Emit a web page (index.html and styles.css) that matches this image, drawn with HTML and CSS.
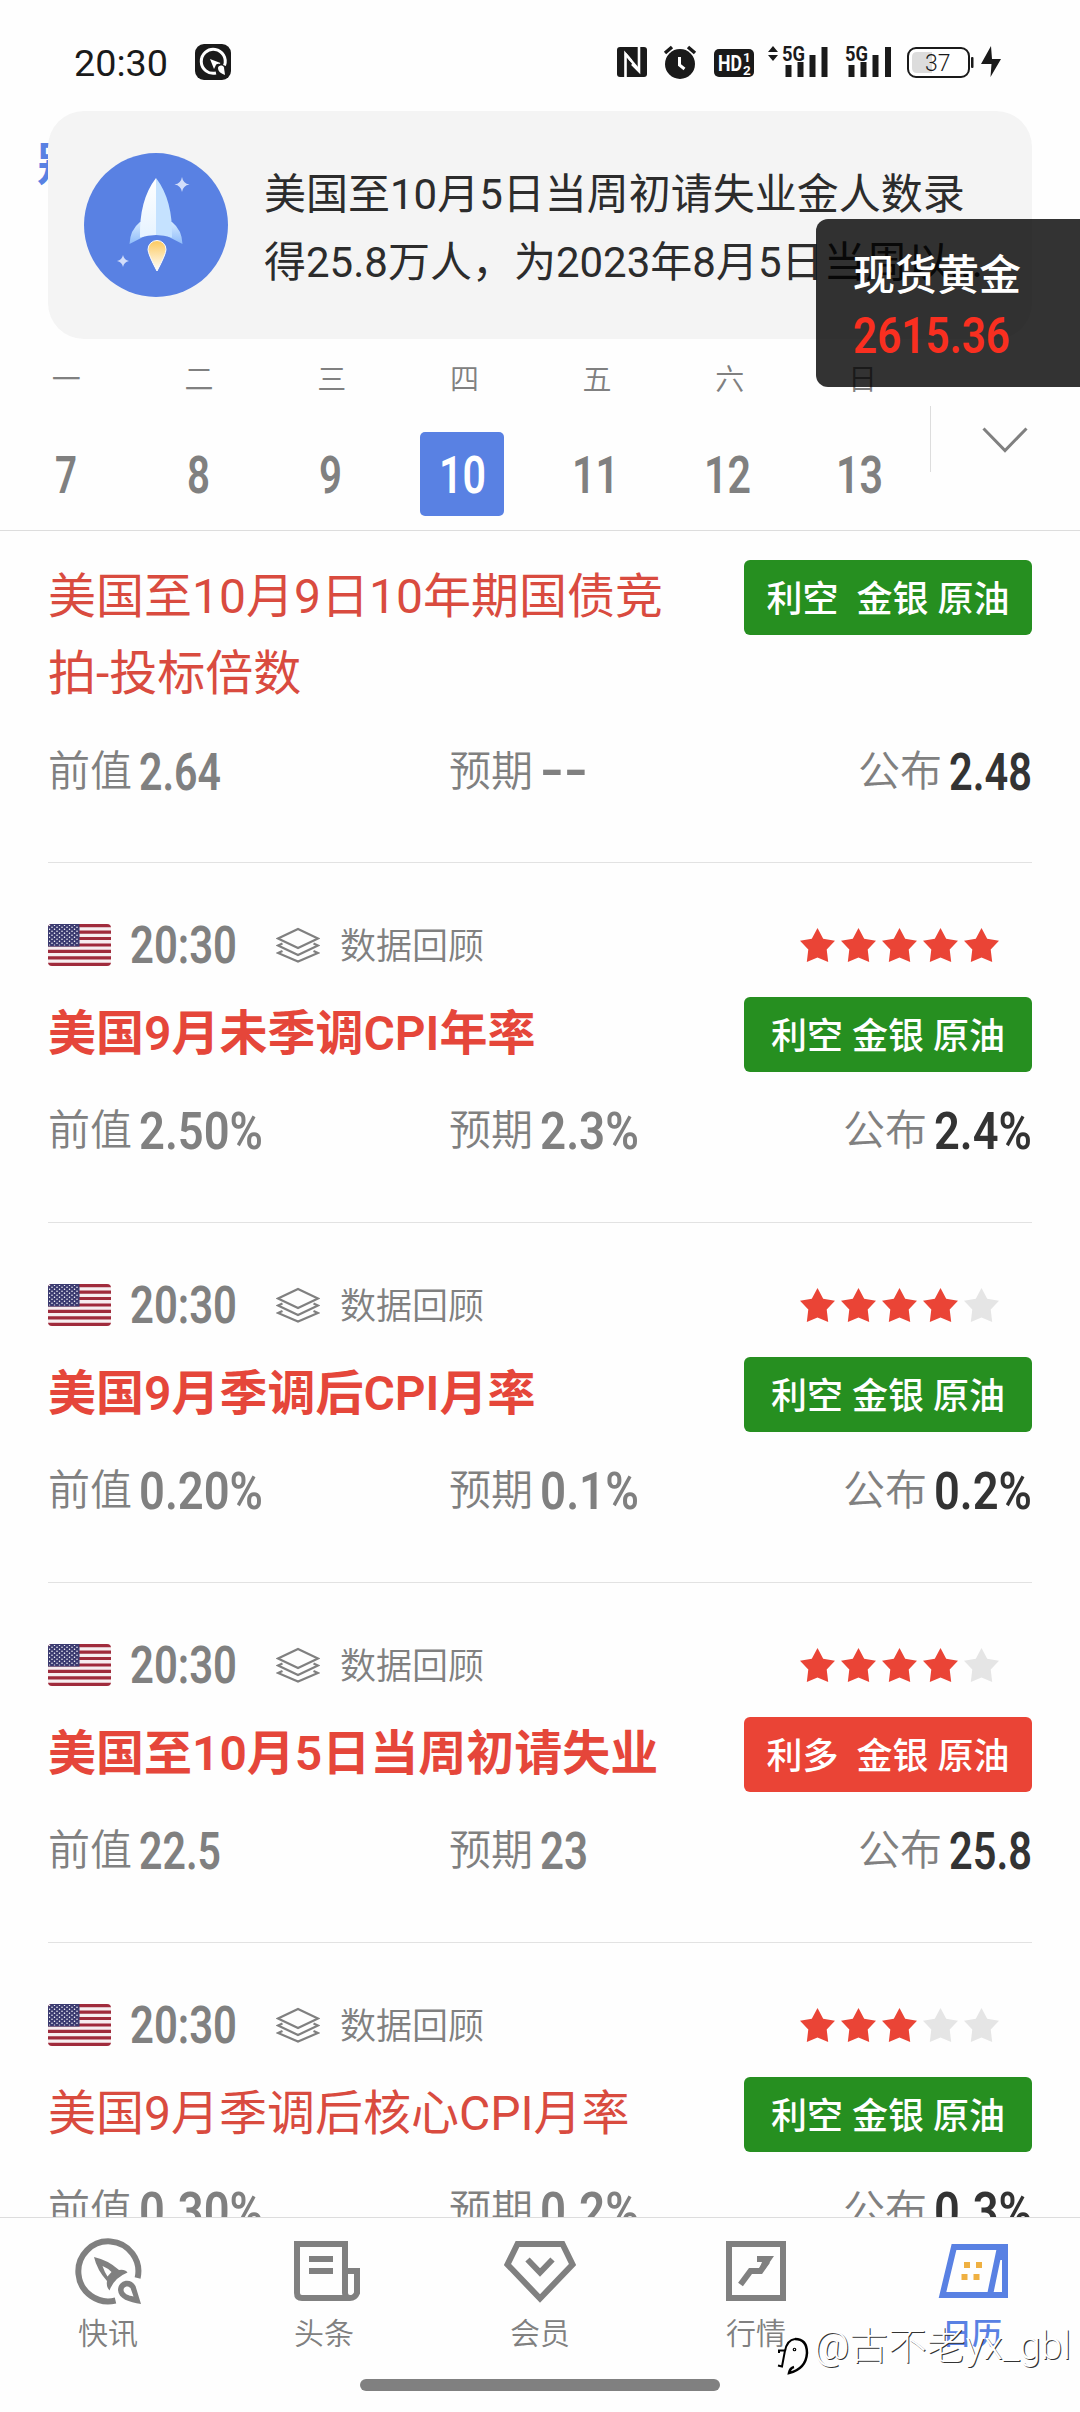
FILE: index.html
```html
<!DOCTYPE html>
<html lang="zh-CN">
<head>
<meta charset="utf-8">
<title>财经日历</title>
<link rel="stylesheet" href="styles.css">
</head>
<body>
<svg class="defs" width="0" height="0">
  <defs>
    <pattern id="dots" width="5" height="4" patternUnits="userSpaceOnUse">
      <circle cx="1.5" cy="1.2" r=".75" fill="#fff"/><circle cx="4" cy="3.2" r=".75" fill="#fff"/>
    </pattern>
    <linearGradient id="flame" x1="0" y1="0" x2="0" y2="1"><stop offset="0" stop-color="#fcc95e"/><stop offset="1" stop-color="#fff"/></linearGradient>
    <linearGradient id="hull" x1="0" y1="0" x2="0" y2="1"><stop offset="0" stop-color="#fff"/><stop offset="1" stop-color="#e6f3ff"/></linearGradient>
    <linearGradient id="fin" x1="0" y1="0" x2="0" y2="1"><stop offset="0" stop-color="#d5eaff"/><stop offset="1" stop-color="#8fbcfa"/></linearGradient>
    <symbol id="flag" viewBox="0 0 63 42">
      <path fill="#f7eef0" d="M0 0h63v42H0z"/>
      <path fill="#a02b3c" d="M0 0h63v3.2H0zM0 6.5h63v3.2H0zM0 12.9h63v3.2H0zM0 19.4h63v3.2H0zM0 25.8h63v3.2H0zM0 32.3h63v3.2H0zM0 38.8h63V42H0z"/>
      <path fill="#3a3a70" d="M0 0h31.5v22.6H0z"/><path fill="url(#dots)" d="M1 1h29.5v20.6H1z"/>
    </symbol>
    <symbol id="layers" viewBox="0 0 44 36">
      <g fill="none" stroke="#808080" stroke-width="2.200">
        <path d="M2 11.5 22 2l20 9.500L22 21z"/>
        <path d="M6.500 16.500 2 18.500 22 28l20-9.500-4.500-2M6.500 24 2 26l20 8.500L42 26l-4.500-2"/>
      </g>
    </symbol>
    <symbol id="star" viewBox="0 0 35 34"><path fill="currentColor" d="M17.500 0 23.200 10.800 35 12.800 26.700 21.500 28.200 34 17.500 29.500 6.800 34 8.300 21.500 0 12.800 11.800 10.800z"/></symbol>
  </defs>
</svg>
<div class="screen">
  <header class="top">
    <div class="status">
      <svg class="clock" width="94" height="27"><text y="26.500" textLength="94" lengthAdjust="spacingAndGlyphs">20:30</text></svg>
      <svg class="app-mark" width="36" height="36" viewBox="0 0 36 36">
        <rect width="36" height="36" rx="9" fill="#1a1a1a"/>
        <path d="M29.500 21.500A12 12 0 1 0 21 29" fill="none" stroke="#fff" stroke-width="3"/>
        <path d="m15 15 4 10 1.500-3c.5-1.500 2-2.500 4-2l1-1z" fill="#fff"/>
        <path d="m30 31-1-7.500c-1-3-6-2.500-6 .5 0 3 2 5 7 7z" fill="#fff"/>
      </svg>
      <svg class="sys" width="388" height="40" viewBox="615 42 388 40" fill="#1a1a1a">
        <rect x="617" y="47" width="30" height="30" rx="3"/>
        <path d="M625.500 77V54l6 7M632 64l7 7V47" fill="none" stroke="#fff" stroke-width="2.600"/>
        <path d="m625.500 54 13.500 16" fill="none" stroke="#fff" stroke-width="2.600"/>
        <circle cx="680" cy="64" r="15"/><path d="m665 53 7-6M695 53l-7-6" stroke="#1a1a1a" stroke-width="3.500"/><path d="M679.500 57v8l5 4" fill="none" stroke="#fff" stroke-width="3"/>
        <rect x="714" y="49" width="40" height="28" rx="5"/>
        <text x="718" y="71" class="hd" textLength="24" lengthAdjust="spacingAndGlyphs">HD</text><text x="743" y="62" class="hd-s">1</text><text x="743" y="74.500" class="hd-s">2</text>
        <path d="m768 52 5-6 5 6zM768 55h10l-5 6z"/>
        <text x="782" y="60.500" class="gen" textLength="23" lengthAdjust="spacingAndGlyphs">5G</text>
        <path d="M785.500 65h6v12h-6zM797.500 62h6v15h-6zM809.500 55h6v22h-6zM821.500 47h6v30h-6z"/>
        <text x="845" y="60.500" class="gen" textLength="23" lengthAdjust="spacingAndGlyphs">5G</text>
        <path d="M848.500 65h6v12h-6zM860.500 62h6v15h-6zM872.500 55h6v22h-6zM885 47h6v30h-6z"/>
        <rect x="908" y="48" width="61" height="29" rx="8" fill="#fff" stroke="#1a1a1a" stroke-width="2"/>
        <path d="M932 52h-15q-5 0-5 5v11q0 5 5 5h15z" fill="#dcdcdc"/>
        <text x="925" y="71" class="batt">37</text>
        <rect x="971" y="57" width="2.500" height="11" rx="1"/>
        <path d="m991 46-10 18h7.500l3 0-1 13 10.500-18h-9z"/>
      </svg>
    </div>
    <div class="page-title">别</div>
    <div class="week">
      <div class="grid days"><span>一</span><span>二</span><span>三</span><span>四</span><span>五</span><span>六</span><span>日</span></div>
      <div class="grid dates">
        <span><svg class="num" width="22" height="36"><text y="36" textLength="22" lengthAdjust="spacingAndGlyphs">7</text></svg></span>
        <span><svg class="num" width="23" height="36"><text y="36" textLength="23" lengthAdjust="spacingAndGlyphs">8</text></svg></span>
        <span><svg class="num" width="23" height="36"><text y="36" textLength="23" lengthAdjust="spacingAndGlyphs">9</text></svg></span>
        <span class="on"><svg class="num" width="47" height="36"><text y="36" textLength="47" lengthAdjust="spacingAndGlyphs">10</text></svg></span>
        <span><svg class="num" width="47" height="36"><text y="36" textLength="47" lengthAdjust="spacingAndGlyphs">11</text></svg></span>
        <span><svg class="num" width="47" height="36"><text y="36" textLength="47" lengthAdjust="spacingAndGlyphs">12</text></svg></span>
        <span><svg class="num" width="47" height="36"><text y="36" textLength="47" lengthAdjust="spacingAndGlyphs">13</text></svg></span>
      </div>
      <div class="expand"><svg width="46" height="26" viewBox="0 0 46 26"><path d="m1.500 1.500 21.500 22 21.500-22" fill="none" stroke="#808080" stroke-width="3"/></svg></div>
    </div>
  </header>

  <main class="list">
    <article class="item first">
      <div class="head"><h2>美国至10月9日10年期国债竞拍-投标倍数</h2><b class="tag">利空  金银 原油</b></div>
      <div class="vals">
        <p><span>前值</span><svg class="num" width="82" height="36"><text y="36" textLength="82" lengthAdjust="spacingAndGlyphs">2.64</text></svg></p>
        <p><span>预期</span><svg class="num" width="48" height="36"><text y="34" textLength="48" lengthAdjust="spacingAndGlyphs">--</text></svg></p>
        <p class="out"><span>公布</span><svg class="num" width="83" height="36"><text y="36" textLength="83" lengthAdjust="spacingAndGlyphs">2.48</text></svg></p>
      </div>
    </article>
    <article class="item">
      <div class="meta"><svg class="flag"><use href="#flag"/></svg><svg class="num" width="107" height="36"><text y="36" textLength="107" lengthAdjust="spacingAndGlyphs">20:30</text></svg><svg class="lay"><use href="#layers"/></svg><span>数据回顾</span>
        <div class="stars"><svg><use href="#star"/></svg><svg><use href="#star"/></svg><svg><use href="#star"/></svg><svg><use href="#star"/></svg><svg><use href="#star"/></svg></div></div>
      <div class="head"><h2 class="bold">美国9月未季调CPI年率</h2><b class="tag">利空 金银 原油</b></div>
      <div class="vals">
        <p><span>前值</span><svg class="num" width="124" height="36"><text y="36" textLength="124" lengthAdjust="spacingAndGlyphs">2.50%</text></svg></p>
        <p><span>预期</span><svg class="num" width="99" height="36"><text y="36" textLength="99" lengthAdjust="spacingAndGlyphs">2.3%</text></svg></p>
        <p class="out"><span>公布</span><svg class="num" width="98" height="36"><text y="36" textLength="98" lengthAdjust="spacingAndGlyphs">2.4%</text></svg></p>
      </div>
    </article>
    <article class="item">
      <div class="meta"><svg class="flag"><use href="#flag"/></svg><svg class="num" width="107" height="36"><text y="36" textLength="107" lengthAdjust="spacingAndGlyphs">20:30</text></svg><svg class="lay"><use href="#layers"/></svg><span>数据回顾</span>
        <div class="stars"><svg><use href="#star"/></svg><svg><use href="#star"/></svg><svg><use href="#star"/></svg><svg><use href="#star"/></svg><svg class="off"><use href="#star"/></svg></div></div>
      <div class="head"><h2 class="bold">美国9月季调后CPI月率</h2><b class="tag">利空 金银 原油</b></div>
      <div class="vals">
        <p><span>前值</span><svg class="num" width="124" height="36"><text y="36" textLength="124" lengthAdjust="spacingAndGlyphs">0.20%</text></svg></p>
        <p><span>预期</span><svg class="num" width="99" height="36"><text y="36" textLength="99" lengthAdjust="spacingAndGlyphs">0.1%</text></svg></p>
        <p class="out"><span>公布</span><svg class="num" width="98" height="36"><text y="36" textLength="98" lengthAdjust="spacingAndGlyphs">0.2%</text></svg></p>
      </div>
    </article>
    <article class="item">
      <div class="meta"><svg class="flag"><use href="#flag"/></svg><svg class="num" width="107" height="36"><text y="36" textLength="107" lengthAdjust="spacingAndGlyphs">20:30</text></svg><svg class="lay"><use href="#layers"/></svg><span>数据回顾</span>
        <div class="stars"><svg><use href="#star"/></svg><svg><use href="#star"/></svg><svg><use href="#star"/></svg><svg><use href="#star"/></svg><svg class="off"><use href="#star"/></svg></div></div>
      <div class="head"><h2 class="bold">美国至10月5日当周初请失业</h2><b class="tag up">利多  金银 原油</b></div>
      <div class="vals">
        <p><span>前值</span><svg class="num" width="82" height="36"><text y="36" textLength="82" lengthAdjust="spacingAndGlyphs">22.5</text></svg></p>
        <p><span>预期</span><svg class="num" width="48" height="36"><text y="36" textLength="48" lengthAdjust="spacingAndGlyphs">23</text></svg></p>
        <p class="out"><span>公布</span><svg class="num" width="83" height="36"><text y="36" textLength="83" lengthAdjust="spacingAndGlyphs">25.8</text></svg></p>
      </div>
    </article>
    <article class="item">
      <div class="meta"><svg class="flag"><use href="#flag"/></svg><svg class="num" width="107" height="36"><text y="36" textLength="107" lengthAdjust="spacingAndGlyphs">20:30</text></svg><svg class="lay"><use href="#layers"/></svg><span>数据回顾</span>
        <div class="stars"><svg><use href="#star"/></svg><svg><use href="#star"/></svg><svg><use href="#star"/></svg><svg class="off"><use href="#star"/></svg><svg class="off"><use href="#star"/></svg></div></div>
      <div class="head"><h2>美国9月季调后核心CPI月率</h2><b class="tag">利空 金银 原油</b></div>
      <div class="vals">
        <p><span>前值</span><svg class="num" width="124" height="36"><text y="36" textLength="124" lengthAdjust="spacingAndGlyphs">0.30%</text></svg></p>
        <p><span>预期</span><svg class="num" width="99" height="36"><text y="36" textLength="99" lengthAdjust="spacingAndGlyphs">0.2%</text></svg></p>
        <p class="out"><span>公布</span><svg class="num" width="98" height="36"><text y="36" textLength="98" lengthAdjust="spacingAndGlyphs">0.3%</text></svg></p>
      </div>
    </article>
  </main>

  <nav class="tabs">
    <div class="tab"><svg viewBox="72 2235 72 72"><path d="M137.600 2278A30 30 0 1 0 115.500 2300.500" fill="none" stroke="#808080" stroke-width="6"/><path d="M94 2257Q108 2260 119 2270 125 2269 127.500 2272.500 114 2278 109.500 2290.500 106 2287 107 2281 97 2270 94 2257zM102.500 2266q2 6 5 10.500l4-4.500q-4-4-9-6z" fill="#808080" fill-rule="evenodd"/><path d="M141 2304 135.500 2286C131 2277 118 2280 118 2290 118.500 2299 129 2302 141 2304zM133.500 2296.500 130.500 2288C128 2285 123.500 2286.500 123.500 2290 124 2294 128.500 2295.500 133.500 2296.500z" fill="#808080" fill-rule="evenodd"/></svg><span>快讯</span></div>
    <div class="tab"><svg viewBox="288 2235 72 72"><path d="M345 2298h-43q-5 0-5-5v-49h48v49q0 5 5 5t7-5v-22h-12M345 2298h7M309 2259h24M309 2271h24" fill="none" stroke="#808080" stroke-width="6"/></svg><span>头条</span></div>
    <div class="tab"><svg viewBox="504 2235 72 72"><path d="M517.500 2244h45l10 20.500L540 2298.500 507.500 2264.500zM527.500 2259.500 540 2272.500 552.500 2259.500" fill="none" stroke="#808080" stroke-width="6"/></svg><span>会员</span></div>
    <div class="tab"><svg viewBox="720 2235 72 72"><path d="M729 2244h54v54h-54zM740.500 2284.500 750.500 2271h10l7-10" fill="none" stroke="#808080" stroke-width="6"/><path d="M757 2256h17l-9 13-5-2 2-5h-5z" fill="#808080"/></svg><span>行情</span></div>
    <div class="tab on"><svg viewBox="936 2235 72 72"><path d="M954 2247h51v48h-62.500zM1000 2247l-10 48" fill="none" stroke="#5981e3" stroke-width="6"/><path d="M1000 2250h5v10h-5z" fill="#5981e3"/><path d="M964 2262h6v6h-6zM976 2262h6v6h-6zM961.500 2274h6v6h-6zM973.500 2274h6v6h-6z" fill="#efb041"/></svg><span>日历</span></div>
  </nav>
  <div class="home"></div>

  <div class="banner">
    <svg width="144" height="144" viewBox="0 0 144 144">
      <circle cx="72" cy="72" r="72" fill="#5981e3"/>
      <path d="M56 69Q46 77 45.500 91L60 83.500V69zM88 69Q98 77 98.500 91L84 83.500V69z" fill="url(#fin)"/>
      <path d="M72 25Q55 47 56 84.500Q64 82 72 82z" fill="url(#hull)"/>
      <path d="M72 25Q89 47 88 84.500Q80 82 72 82z" fill="#c5e2ff"/>
      <path d="M73 118Q64 101 64 96.500a9 9 0 0 1 18 0Q82 101 73 118z" fill="url(#flame)" stroke="#fff" stroke-width="1"/>
      <path d="M98 24q1 6.500 7.500 7.500-6.500 1-7.500 7.500-1-6.500-7.500-7.500 6.500-1 7.500-7.500zM39 102q1 5 6 6-5 1-6 6-1-5-6-6 5-1 6-6z" fill="#d3defa"/>
    </svg>
    <p>美国至10月5日当周初请失业金人数录<br>得25.8万人，为2023年8月5日当周以...</p>
  </div>
  <div class="quote">
    <strong>现货黄金</strong>
    <svg width="157" height="36"><text y="36" textLength="157" lengthAdjust="spacingAndGlyphs">2615.36</text></svg>
  </div>
  <div class="sign">
    <svg width="34" height="40" viewBox="776 2336 34 40" fill="none" stroke="#000" stroke-width="2.500"><path d="M779 2353v-2.500h6l-3 16-4-1" stroke-width="2"/><path d="M785 2351q2-11 10-12" stroke-width="2"/><path d="M795 2339q12 0 12 14-1 16-18 20 1-5 5-6"/><circle cx="794.500" cy="2349.500" r=".6"/></svg>
    <svg class="sign-text" width="260" height="50"><text y="34" textLength="257" lengthAdjust="spacingAndGlyphs">@古不老yx_gbl</text></svg>
  </div>
</div>
</body>
</html>
```

FILE: styles.css
```css
* { box-sizing: border-box; margin: 0; padding: 0; }
body { background: #fff; font-family: Roboto, "Noto Sans CJK SC", sans-serif; color: #333; }
svg { display: block; flex: none; }
.defs { position: absolute; }
.screen { position: relative; width: 1080px; height: 2412px; display: flex; flex-direction: column; overflow: hidden; background: #fefefe; }

/* status bar, title and week strip */
.top { height: 531px; flex: none; display: flex; flex-direction: column; border-bottom: 1px solid #ddd; }
.status { height: 111px; display: flex; align-items: flex-start; padding: 42px 77px 0 74px; }
.clock { margin: 7px 27px 0 0; overflow: visible; font-size: 37px; fill: #1a1a1a; }
.app-mark { margin-top: 2px; }
.sys { margin-left: auto; }
.sys text { font-family: Roboto, sans-serif; }
.sys .hd { font-size: 22px; font-weight: 700; fill: #fff; }
.sys .hd-s { font-size: 13.500px; font-weight: 700; fill: #fff; }
.sys .gen { font-size: 21px; font-weight: 700; }
.sys .batt { font-size: 23px; font-weight: 350; }
.page-title { height: 242px; padding: 24px 0 0 37px; font-size: 46px; line-height: 58px; font-weight: 700; color: #5981e3; }
.week { flex: 1; display: grid; grid-template-columns: 928px 1fr; grid-template-rows: 52px 1fr; }
.grid { grid-column: 1; display: grid; grid-template-columns: repeat(7, 132.300px); justify-items: center; }
.days { grid-template-columns: repeat(7, 132.700px); font-size: 29px; line-height: 54px; font-weight: 350; color: #808080; }
.dates { align-items: start; padding-top: 27px; }
.dates span { width: 84px; height: 84px; display: flex; align-items: center; justify-content: center; border-radius: 5px; padding-top: 2px; }
.dates .on { background: #5981e3; transform: translateX(-1px); }
.dates .on .num { fill: #fff; }
.expand { grid-column: 2; grid-row: 1 / 3; margin: 53px 0 0 2px; height: 66px; border-left: 1px solid #ddd; padding: 21px 0 0 51px; }

.num { overflow: visible; font-family: Roboto, sans-serif; font-size: 51.500px; font-weight: 650; fill: #808080; }

/* data releases */
.list { flex: 1; min-height: 0; overflow: hidden; padding: 0 48px; }
.item { height: 360px; border-bottom: 1px solid #e2e2e2; padding-top: 60px; }
.item.first { height: 332px; padding-top: 29px; }
.meta { display: flex; align-items: center; height: 43px; font-size: 36px; font-weight: 350; color: #808080; }
.meta span { margin-top: -3px; }
.flag { width: 63px; height: 42px; border-radius: 4px; }
.meta .num { margin-left: 19px; }
.lay { width: 44px; height: 36px; margin: 0 20px 0 39px; }
.stars { margin-left: auto; margin-right: 33px; display: flex; gap: 6px; color: #ea4436; }
.stars svg { width: 35px; height: 34px; }
.stars .off { color: #e5e5e5; }
.head { display: flex; justify-content: space-between; align-items: flex-start; height: 106px; padding-top: 31px; }
.head h2 { width: 630px; margin-top: -2px; font-size: 48px; line-height: 77px; font-weight: 400; color: #d94b3f; }
.head h2.bold { font-weight: 600; color: #e5463a; }
.first .head { height: 154px; padding-top: 0; }
.first .head h2 { margin-top: -2px; }
.tag { width: 288px; height: 75px; border-radius: 6px; background: #268f20; color: #fff; font-size: 36px; line-height: 80px; font-weight: 500; text-align: center; white-space: pre; }
.tag.up { background: #ea4436; }
.vals { display: grid; grid-template-columns: 401px 1fr 1fr; align-items: center; height: 60px; margin-top: 29px; }
.first .vals { margin-top: 28px; }
.vals p { display: flex; align-items: center; gap: 7px; font-size: 42px; line-height: 60px; font-weight: 350; color: #808080; }
.vals .out { justify-content: flex-end; }
.vals .out .num { fill: #333; }

/* bottom navigation */
.tabs { height: 195px; flex: none; display: grid; grid-template-columns: repeat(5, 216px); border-top: 1px solid #ddd; background: #fefefe; padding-top: 17px; }
.tab { display: flex; flex-direction: column; align-items: center; gap: 6px; font-size: 30px; line-height: 42px; font-weight: 350; color: #808080; }
.tab svg { width: 72px; height: 72px; }
.tab.on { color: #5981e3; font-weight: 500; }
.home { position: absolute; left: 360px; top: 2379px; width: 360px; height: 12px; border-radius: 6px; background: #808080; }

/* layers floating above the page */
.banner { position: absolute; left: 48px; top: 111px; width: 984px; height: 228px; border-radius: 36px; background: #f4f4f4; display: flex; align-items: center; padding: 0 30px 0 36px; gap: 36px; }
.banner p { padding-top: 8px; font-size: 42px; line-height: 68px; color: #2c2c2c; font-weight: 370; white-space: nowrap; }
.quote { position: absolute; left: 816px; top: 219px; width: 264px; height: 168px; border-radius: 12px 0 0 12px; background: rgba(0, 0, 0, .8); padding: 27px 0 0 37px; color: #fff; }
.quote strong { display: block; font-size: 42px; line-height: 60px; font-weight: 500; margin-bottom: 11px; }
.quote svg { overflow: visible; font-size: 50px; font-weight: 600; fill: #f92f20; }
.sign { position: absolute; left: 776px; top: 2325px; display: flex; gap: 4px; }
.sign > svg:first-child { margin-top: 11px; }
.sign-text { overflow: visible; font-size: 38px; font-weight: 300; fill: #fff; text-shadow: 1px 1px 0 #333; }
```
